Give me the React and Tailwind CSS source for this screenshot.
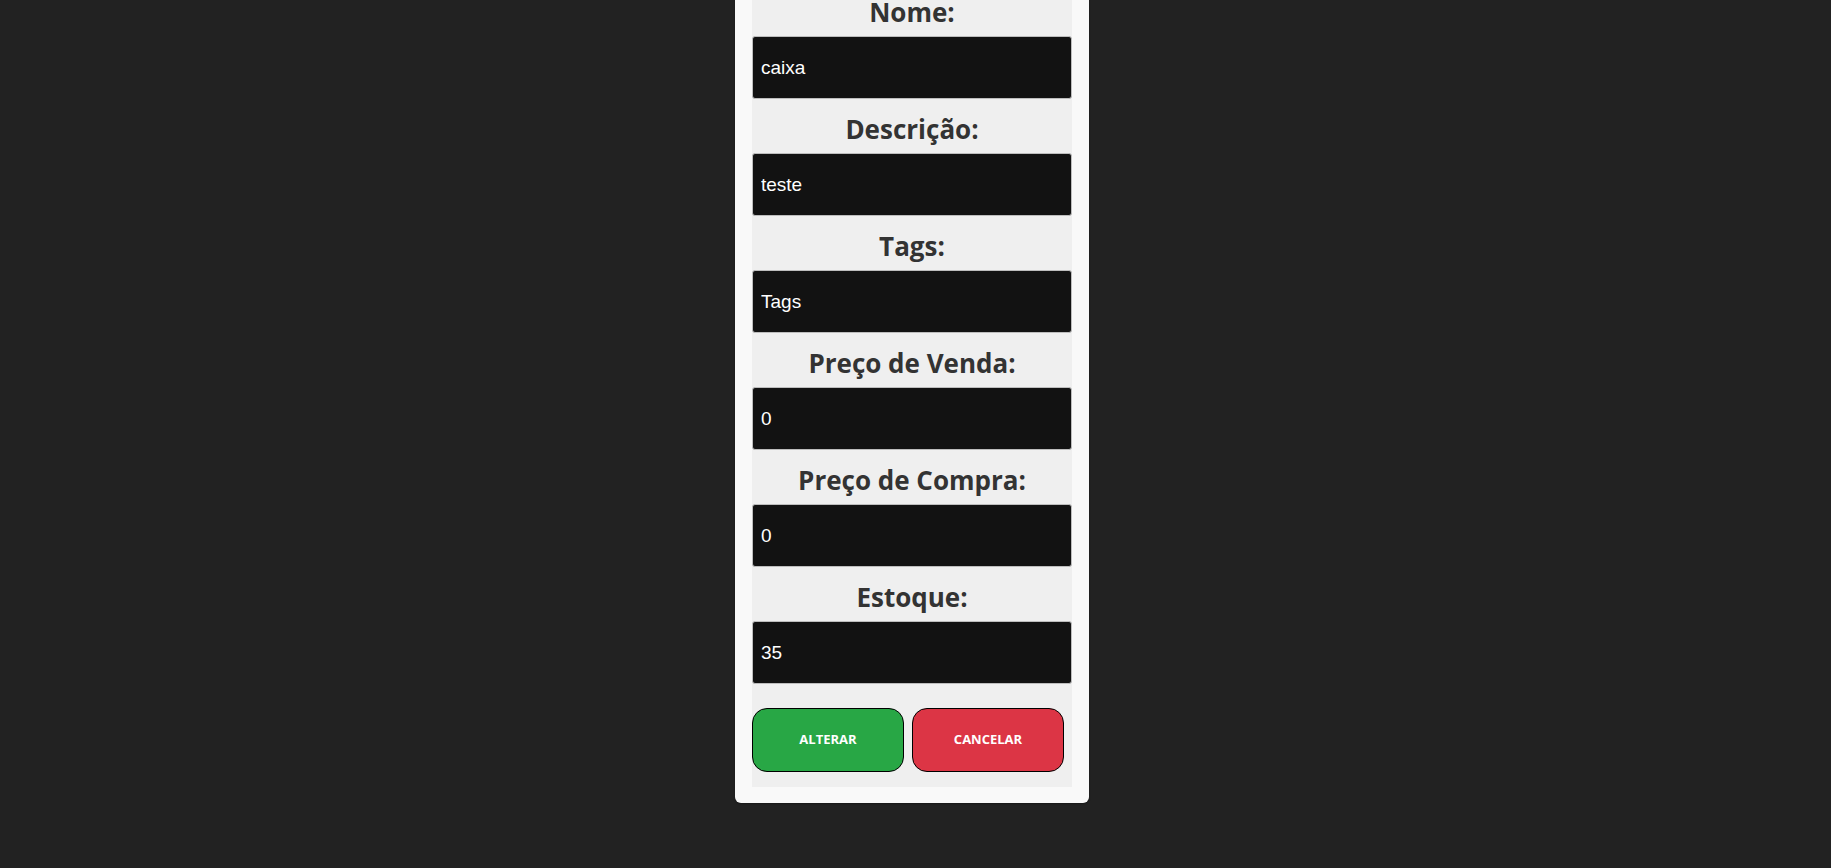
import React from 'react';

const fields = [
  { label: 'Nome:', value: 'caixa' },
  { label: 'Descrição:', value: 'teste' },
  { label: 'Tags:', value: 'Tags' },
  { label: 'Preço de Venda:', value: '0' },
  { label: 'Preço de Compra:', value: '0' },
  { label: 'Estoque:', value: '35' },
];

const App = () => {
  return (
    <div className="min-h-screen bg-[#222222] flex justify-center pr-[7px] overflow-hidden">
      <div className="w-[354px] -mt-[35px] self-start bg-[#f9f9f9] rounded-b-[6px] px-[17px] pt-[17px] pb-[16px] shadow-[0_1px_2px_rgba(0,0,0,0.3)]">
        <div className="bg-[#efefef] pb-[15px]">
          {fields.map((f) => (
            <div key={f.label}>
              <div
                className="pt-[14px] pb-[8px] text-center text-[26px] leading-[32px] font-bold text-[#333333]"
                style={{ fontFamily: '"Open Sans", sans-serif' }}
              >
                {f.label}
              </div>
              <input
                type="text"
                defaultValue={f.value}
                className="block w-full h-[63px] bg-[#121212] border border-[#bdbdbd] rounded-[3px] px-[8px] text-[19px] text-white outline-none"
                style={{ fontFamily: '"Liberation Sans", Arial, sans-serif' }}
              />
            </div>
          ))}
          <div className="flex gap-[8px] mt-[24px]">
            <button
              className="w-[152px] h-[64px] bg-[#28a745] border border-black rounded-[15px] text-white text-[13px] font-bold uppercase"
              style={{ fontFamily: '"Open Sans", sans-serif' }}
            >
              Alterar
            </button>
            <button
              className="w-[152px] h-[64px] bg-[#dc3545] border border-black rounded-[15px] text-white text-[13px] font-bold uppercase"
              style={{ fontFamily: '"Open Sans", sans-serif' }}
            >
              Cancelar
            </button>
          </div>
        </div>
      </div>
    </div>
  );
};

export default App;
